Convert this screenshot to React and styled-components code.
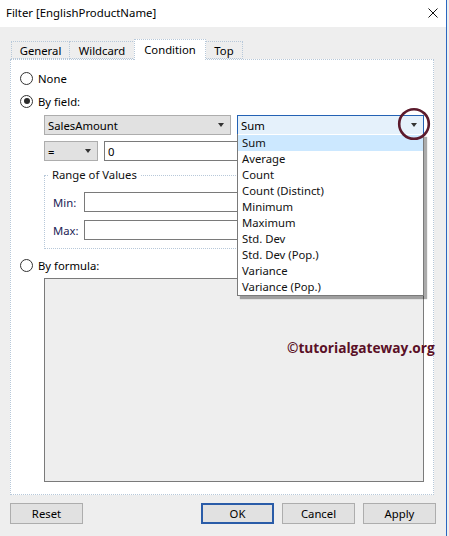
import React from 'react';
import styled, { createGlobalStyle } from 'styled-components';

const Global = createGlobalStyle`
  html, body { margin: 0; padding: 0; background: #eeeeee; }
  body { font-family: "Noto Sans", "Open Sans", sans-serif; font-size: 11.3px; color: #111; }
  * { box-sizing: border-box; }
`;

const Window = styled.div`
  width: 447px;
  height: 536px;
  border-right: 1px solid #2b66c0;
  background: #eeeeee;
  display: flex;
  flex-direction: column;
`;

const TitleBar = styled.div`
  height: 27px;
  flex: none;
  background: #ffffff;
  display: flex;
  align-items: center;
  justify-content: space-between;
  padding: 0 8px 2px 6px;
`;

const Title = styled.span`
  font-size: 11.4px;
  color: #000;
`;

const CloseIcon = styled.svg`
  width: 10px;
  height: 10px;
  display: block;
`;

const Body = styled.div`
  padding: 12px 10px 0 10px;
  display: flex;
  flex-direction: column;
`;

const TabStrip = styled.div`
  display: flex;
  align-items: flex-end;
  height: 20px;
  margin-left: 1px;
  position: relative;
  z-index: 2;
`;

const Tab = styled.div`
  width: ${p => p.$w}px;
  height: ${p => (p.$active ? 21 : 18)}px;
  margin-bottom: ${p => (p.$active ? -1 : 0)}px;
  margin-left: ${p => (p.$first ? 0 : -1)}px;
  background: ${p => (p.$active ? '#ffffff' : '#eeeeee')};
  border: 1px dotted #b7c8d9;
  border-bottom: ${p => (p.$active ? 'none' : '1px dotted #b7c8d9')};
  display: flex;
  align-items: center;
  justify-content: center;
  padding-bottom: ${p => (p.$active ? 2 : 0)}px;
  color: #000;
  position: relative;
  z-index: ${p => (p.$active ? 2 : 1)};
`;

const Panel = styled.div`
  width: 424px;
  height: 436px;
  background: #ffffff;
  border: 1px dotted #b7c8d9;
  position: relative;
  padding: 10px 0 0 9px;
  display: flex;
  flex-direction: column;
`;

const RadioRow = styled.label`
  display: flex;
  align-items: center;
  gap: 5px;
  height: 16px;
  margin-top: ${p => p.$mt || 0}px;
  color: #000;
`;

const RadioCircle = styled.span`
  width: 13px;
  height: 13px;
  border-radius: 50%;
  border: 1px solid #333333;
  background: #ffffff;
  display: flex;
  align-items: center;
  justify-content: center;
  &::after {
    content: '';
    width: 6px;
    height: 6px;
    border-radius: 50%;
    background: ${p => (p.$checked ? '#2a2a2a' : 'transparent')};
  }
`;

const ControlRow = styled.div`
  display: flex;
  gap: 6px;
  margin: ${p => p.$mt || 0}px 0 0 24px;
  width: 380px;
  height: 20px;
`;

const Combo = styled.div`
  width: ${p => p.$w}px;
  height: 20px;
  flex: none;
  position: relative;
  display: flex;
  align-items: center;
  justify-content: space-between;
  padding: 0 6px 0 3px;
  background: ${p => (p.$focused ? '#e5f1fb' : '#e1e1e1')};
  border: 1px solid ${p => (p.$focused ? '#2462b4' : '#adadad')};
  color: #000;
`;

const Arrow = styled.span`
  width: 0;
  height: 0;
  border-left: 3.5px solid transparent;
  border-right: 3.5px solid transparent;
  border-top: 4px solid #333333;
`;

const TextInput = styled.div`
  flex: 1;
  height: 20px;
  background: #ffffff;
  border: 1px solid #7a7a7a;
  padding: 0 3px;
  display: flex;
  align-items: center;
  color: #000;
`;

const DropList = styled.div`
  position: absolute;
  top: 100%;
  left: -1px;
  right: -1px;
  background: #ffffff;
  border: 1px solid #7a7a7a;
  border-top: none;
  padding-top: 1px;
  box-shadow: 3px 3px 1px rgba(0, 0, 0, 0.33);
  z-index: 5;
`;

const DropItem = styled.div`
  height: 16px;
  line-height: 16px;
  padding-left: 4px;
  background: ${p => (p.$selected ? '#cce8ff' : 'transparent')};
  color: #111;
`;

const Annotation = styled.svg`
  position: absolute;
  left: 159px;
  top: -9px;
  width: 34px;
  height: 34px;
  z-index: 6;
  overflow: visible;
`;

const GroupBox = styled.fieldset`
  margin: 7px 0 0 24px;
  width: 380px;
  min-width: 0;
  padding: 10px 8px 8px 8px;
  border: 1px dotted #b7c8d9;
  display: flex;
  flex-direction: column;
  gap: 8px;
`;

const GroupLegend = styled.legend`
  padding: 0 4px;
  margin-left: -5px;
  line-height: 14px;
  color: #111;
`;

const FieldRow = styled.div`
  display: flex;
  align-items: center;
  height: 20px;
`;

const FieldLabel = styled.span`
  width: 31px;
  flex: none;
  color: #1c2456;
`;

const FormulaBox = styled.div`
  margin: 5px 0 0 24px;
  width: 380px;
  height: 204px;
  background: #eeeeee;
  border: 1px solid #7a7a7a;
`;

const Watermark = styled.div`
  position: absolute;
  left: 276px;
  top: 279px;
  font-family: "Open Sans", "Noto Sans", sans-serif;
  font-weight: 700;
  font-size: 13.7px;
  line-height: 18px;
  color: #5a1026;
  white-space: nowrap;
  z-index: 3;
`;

const ButtonRow = styled.div`
  display: flex;
  gap: 8px;
  margin-top: 8px;
`;

const Button = styled.div`
  width: 73px;
  height: 21px;
  display: flex;
  align-items: center;
  justify-content: center;
  background: #e1e1e1;
  border: ${p => (p.$default ? '2px solid #2a5ca8' : '1px solid #adadad')};
  margin-left: ${p => (p.$push ? 'auto' : '0')};
  color: #000;
`;

const items = [
  'Sum',
  'Average',
  'Count',
  'Count (Distinct)',
  'Minimum',
  'Maximum',
  'Std. Dev',
  'Std. Dev (Pop.)',
  'Variance',
  'Variance (Pop.)',
];

export default function App() {
  return (
    <>
      <Global />
      <Window>
        <TitleBar>
          <Title>Filter [EnglishProductName]</Title>
          <CloseIcon viewBox="0 0 10 10">
            <path d="M0.5 0.5 L9.5 9.5 M9.5 0.5 L0.5 9.5" stroke="#111" strokeWidth="1" fill="none" />
          </CloseIcon>
        </TitleBar>
        <Body>
          <TabStrip>
            <Tab $w={59} $first>General</Tab>
            <Tab $w={66}>Wildcard</Tab>
            <Tab $w={72} $active>Condition</Tab>
            <Tab $w={38}>Top</Tab>
          </TabStrip>
          <Panel>
            <RadioRow>
              <RadioCircle />
              None
            </RadioRow>
            <RadioRow $mt={7}>
              <RadioCircle $checked />
              By field:
            </RadioRow>
            <ControlRow $mt={6}>
              <Combo $w={187}>
                SalesAmount
                <Arrow />
              </Combo>
              <Combo $w={187} $focused>
                Sum
                <Arrow />
                <Annotation viewBox="0 0 34 34">
                  <circle cx="17" cy="17" r="14.8" stroke="#5b1a2c" strokeWidth="2.6" fill="none" />
                </Annotation>
                <DropList>
                  {items.map((it, i) => (
                    <DropItem key={it} $selected={i === 0}>
                      {it}
                    </DropItem>
                  ))}
                </DropList>
              </Combo>
            </ControlRow>
            <ControlRow $mt={6}>
              <Combo $w={54}>
                =
                <Arrow />
              </Combo>
              <TextInput>0</TextInput>
            </ControlRow>
            <GroupBox>
              <GroupLegend>Range of Values</GroupLegend>
              <FieldRow>
                <FieldLabel>Min:</FieldLabel>
                <TextInput />
              </FieldRow>
              <FieldRow>
                <FieldLabel>Max:</FieldLabel>
                <TextInput />
              </FieldRow>
            </GroupBox>
            <RadioRow $mt={8}>
              <RadioCircle />
              By formula:
            </RadioRow>
            <FormulaBox />
            <Watermark>©tutorialgateway.org</Watermark>
          </Panel>
          <ButtonRow>
            <Button>Reset</Button>
            <Button $default $push>OK</Button>
            <Button>Cancel</Button>
            <Button>Apply</Button>
          </ButtonRow>
        </Body>
      </Window>
    </>
  );
}
